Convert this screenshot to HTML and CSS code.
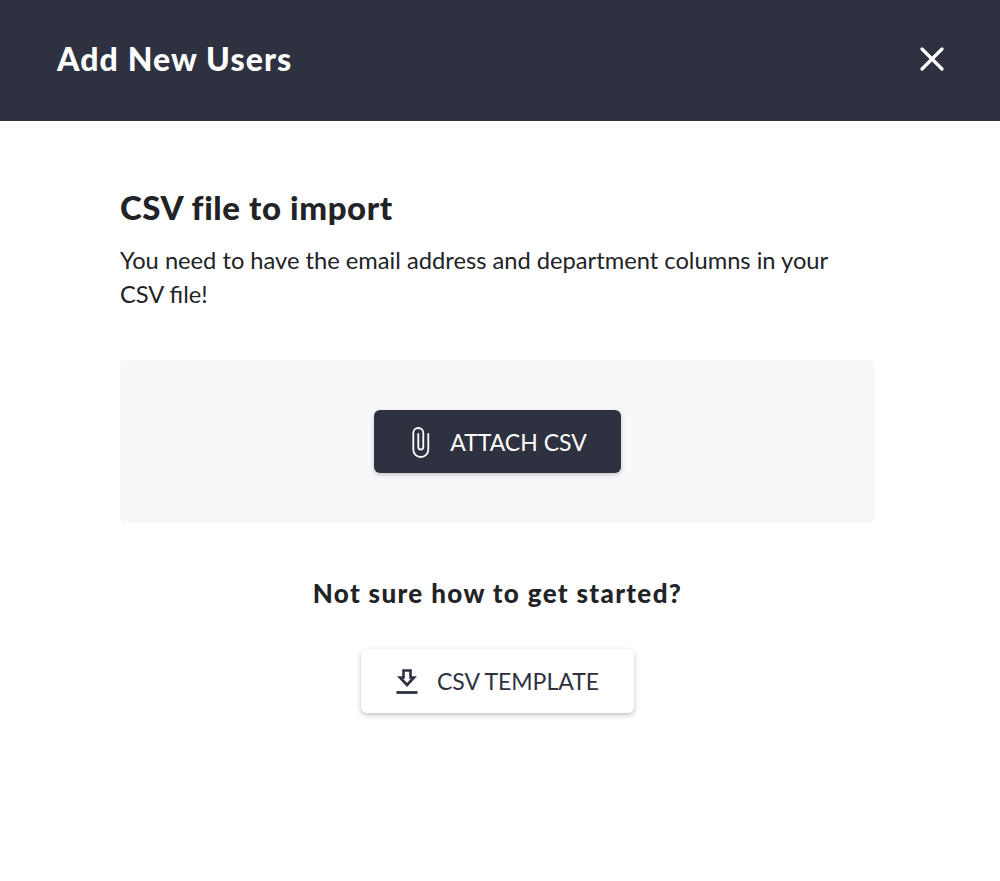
FILE: index.html
```html
<!DOCTYPE html>
<html lang="en">

<head>
    <meta charset="UTF-8">
    <meta name="viewport" content="width=device-width, initial-scale=1.0">
    <title>Add New Users</title>
    <link rel="stylesheet" href="styles.css">
</head>

<body>
    <header class="header">
        <h1 class="header-title">Add New Users</h1>
        <button class="close-btn" aria-label="Close">
            <svg width="24" height="24" viewBox="0 0 24 24" fill="none" stroke="#fff" stroke-width="3.2" stroke-linecap="round">
                <path d="M2 2L22 22M22 2L2 22" />
            </svg>
        </button>
    </header>

    <main class="content">
        <h2 class="section-title">CSV file to import</h2>
        <p class="section-text">You need to have the email address and department columns in your CSV file!</p>

        <div class="attach-panel">
            <button class="btn btn-dark">
                <svg width="18" height="32" viewBox="0 0 18 32" fill="none" stroke="#fff" stroke-width="1.8" stroke-linecap="round">
                    <path d="M16.300 8V23.500A7.500 7.500 0 0 1 1.300 23.500V7A5 5 0 0 1 11.300 7V21A2.500 2.500 0 0 1 6.300 21V8" />
                </svg>
                <span>ATTACH CSV</span>
            </button>
        </div>

        <h3 class="help-title">Not sure how to get started?</h3>

        <div class="help-action">
            <button class="btn btn-light">
                <svg width="22" height="26" viewBox="0 0 22 26" fill="none" stroke="#2e3140" stroke-width="2.6">
                    <path d="M7.500 2.500H14.500V9.500H18L11 17L4 9.500H7.500Z" />
                    <path d="M0.500 24.500H21.500" stroke-width="2.800" />
                </svg>
                <span>CSV TEMPLATE</span>
            </button>
        </div>
    </main>
</body>

</html>
```

FILE: styles.css
```css
* {
    box-sizing: border-box;
}

body {
    margin: 0;
    min-height: 881px;
    background: #fff;
    color: #212326;
    font-family: Lato, "Open Sans", sans-serif;
}

.header {
    height: 121px;
    padding: 0 56px 4px 57px;
    display: flex;
    align-items: center;
    justify-content: space-between;
    background: #2e3140;
    color: #fff;
}

.header-title {
    margin: 0;
    font-size: 32px;
    font-weight: 900;
    letter-spacing: 1.1px;
}

.close-btn {
    display: flex;
    padding: 0;
    background: none;
    border: none;
    cursor: pointer;
}

.content {
    padding: 66px 125px 0 120px;
}

.section-title {
    margin: 0;
    font-size: 33px;
    line-height: 40px;
    font-weight: 900;
    letter-spacing: 0.6px;
}

.section-text {
    margin: 16px 0 0;
    max-width: 720px;
    font-size: 23.7px;
    line-height: 34px;
}

.attach-panel {
    height: 163px;
    margin-top: 49px;
    display: flex;
    align-items: center;
    justify-content: center;
    background: #f7f8fa;
    border-radius: 6px;
}

.help-title {
    margin: 52px 0 0;
    font-size: 26px;
    line-height: 36px;
    font-weight: 900;
    letter-spacing: 1.35px;
    text-align: center;
}

.help-action {
    margin-top: 38px;
    display: flex;
    justify-content: center;
}

.btn {
    display: flex;
    align-items: center;
    justify-content: center;
    border: none;
    border-radius: 6px;
    font-family: inherit;
    font-size: 23px;
    cursor: pointer;
}

.btn-dark {
    width: 247px;
    height: 63px;
    gap: 20px;
    padding: 0 0 0 4px;
    background: #2e3140;
    color: #fff;
    box-shadow: 0 2px 4px rgba(47, 50, 65, 0.25);
}

.btn-light {
    width: 273px;
    height: 64px;
    gap: 19px;
    padding: 0;
    background: #fff;
    color: #2e3140;
    box-shadow: 0 2px 5px rgba(47, 50, 65, 0.3);
}
```
